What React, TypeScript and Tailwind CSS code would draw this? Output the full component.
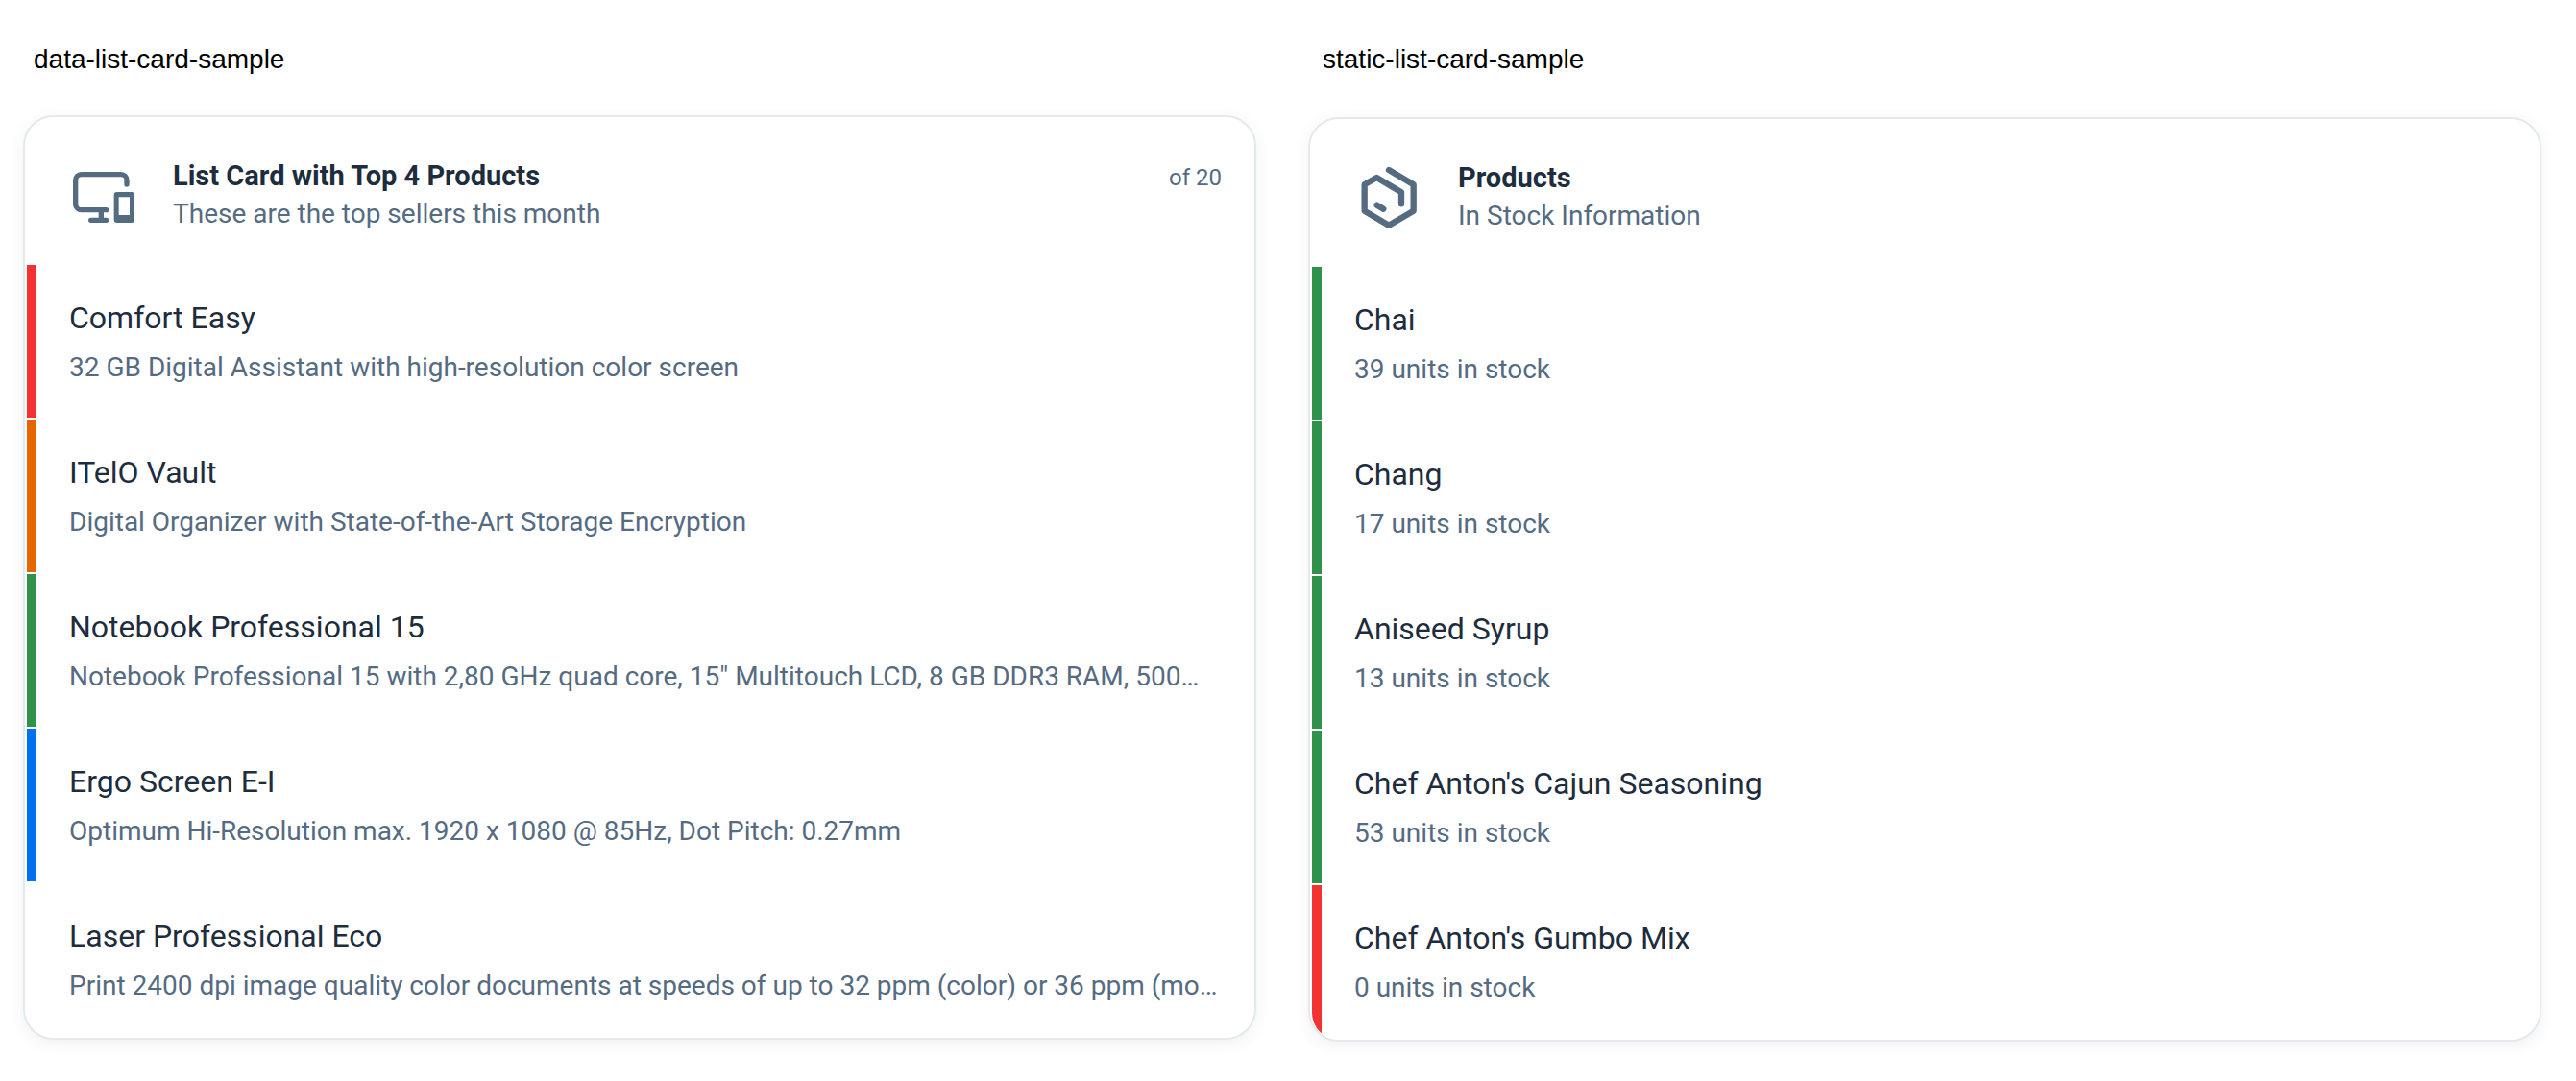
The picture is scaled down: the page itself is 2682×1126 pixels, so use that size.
import type { ReactNode } from "react";

type Item = { title: string; text: string; bar: string };

type CardData = {
  name: string;
  nameClass: string;
  icon: ReactNode;
  title: string;
  subtitle: string;
  status?: string;
  items: Item[];
};

const RED = "bg-[#f53232]";
const ORANGE = "bg-[#e76500]";
const GREEN = "bg-[#30914c]";
const BLUE = "bg-[#0070f2]";
const NONE = "bg-transparent";

function DevicesIcon() {
  return (
    <svg viewBox="0 9 288 240" className="h-20 w-24 shrink-0" fill="none" stroke="currentColor" strokeWidth="16" strokeLinecap="round" aria-hidden="true">
      <path d="M216 96V83a18 18 0 0 0-18-18H74a18 18 0 0 0-18 18v75a18 18 0 0 0 18 18h78" />
      <path d="M136 178v28" strokeLinecap="butt" />
      <path d="M104 208h48" />
      <path
        fill="currentColor"
        stroke="none"
        fillRule="evenodd"
        d="M185 120h46a9 9 0 0 1 9 9v78a9 9 0 0 1-9 9h-46a9 9 0 0 1-9-9v-78a9 9 0 0 1 9-9zM191 136v56h34v-56z"
      />
    </svg>
  );
}

function ProductIcon() {
  return (
    <svg viewBox="-6 15 288 240" className="h-20 w-24 shrink-0" fill="none" stroke="currentColor" strokeWidth="19" strokeLinecap="round" strokeLinejoin="round" aria-hidden="true">
      <path d="M138 51l77 46v82l-77 45-76-45V97l38-22 77 46v36" />
      <path d="M101 161l20 12" />
    </svg>
  );
}

const cards: CardData[] = [
  {
    name: "data-list-card-sample",
    nameClass: "mb-[38px] pl-[11px]",
    icon: <DevicesIcon />,
    title: "List Card with Top 4 Products",
    subtitle: "These are the top sellers this month",
    status: "of 20",
    items: [
      { title: "Comfort Easy", text: "32 GB Digital Assistant with high-resolution color screen", bar: RED },
      { title: "ITelO Vault", text: "Digital Organizer with State-of-the-Art Storage Encryption", bar: ORANGE },
      { title: "Notebook Professional 15", text: 'Notebook Professional 15 with 2,80 GHz quad core, 15" Multitouch LCD, 8 GB DDR3 RAM, 500…', bar: GREEN },
      { title: "Ergo Screen E-I", text: "Optimum Hi-Resolution max. 1920 x 1080 @ 85Hz, Dot Pitch: 0.27mm", bar: BLUE },
      { title: "Laser Professional Eco", text: "Print 2400 dpi image quality color documents at speeds of up to 32 ppm (color) or 36 ppm (mo…", bar: NONE },
    ],
  },
  {
    name: "static-list-card-sample",
    nameClass: "mb-10 pl-[15px]",
    icon: <ProductIcon />,
    title: "Products",
    subtitle: "In Stock Information",
    items: [
      { title: "Chai", text: "39 units in stock", bar: GREEN },
      { title: "Chang", text: "17 units in stock", bar: GREEN },
      { title: "Aniseed Syrup", text: "13 units in stock", bar: GREEN },
      { title: "Chef Anton's Cajun Seasoning", text: "53 units in stock", bar: GREEN },
      { title: "Chef Anton's Gumbo Mix", text: "0 units in stock", bar: RED },
    ],
  },
];

function ListCard({ card }: { card: CardData }) {
  return (
    <section className="min-w-0">
      <h2 className={`font-['Liberation_Sans',sans-serif] text-[28px] leading-10 text-black ${card.nameClass}`}>{card.name}</h2>
      <article className="rounded-[32px] border-2 border-[#e6e9ec] bg-white px-[2px] text-[28px] leading-10 text-[#556b82] shadow-[0_4px_16px_rgba(34,53,72,0.07)]">
        <header className="flex gap-6 px-8 pt-[41px] pb-[33px]">
          {card.icon}
          <div className="min-w-0 flex-1">
            <div className="flex h-10 items-start justify-between gap-8">
              <h3 className="truncate text-[29px] leading-10 font-bold text-[#1d2d3e]">{card.title}</h3>
              {card.status && <span className="text-2xl leading-[44px]">{card.status}</span>}
            </div>
            <p className="truncate">{card.subtitle}</p>
          </div>
        </header>
        <ul className="overflow-hidden rounded-b-[28px]">
          {card.items.map((item) => (
            <li key={item.title} className="flex border-b-2 border-white">
              <span className={`w-[10px] shrink-0 ${item.bar}`} />
              <div className="min-w-0 flex-1 pt-[35px] pr-7 pb-8 pl-[34px]">
                <p className="mb-3 truncate text-[32px] leading-10 text-[#1d2d3e]">{item.title}</p>
                <p className="truncate">{item.text}</p>
              </div>
            </li>
          ))}
        </ul>
      </article>
    </section>
  );
}

export default function App() {
  return (
    <main className="grid grid-cols-2 items-start gap-[54px] bg-white pt-[42px] pr-9 pb-10 pl-6 font-['Roboto',sans-serif]">
      {cards.map((card) => (
        <ListCard key={card.name} card={card} />
      ))}
    </main>
  );
}
